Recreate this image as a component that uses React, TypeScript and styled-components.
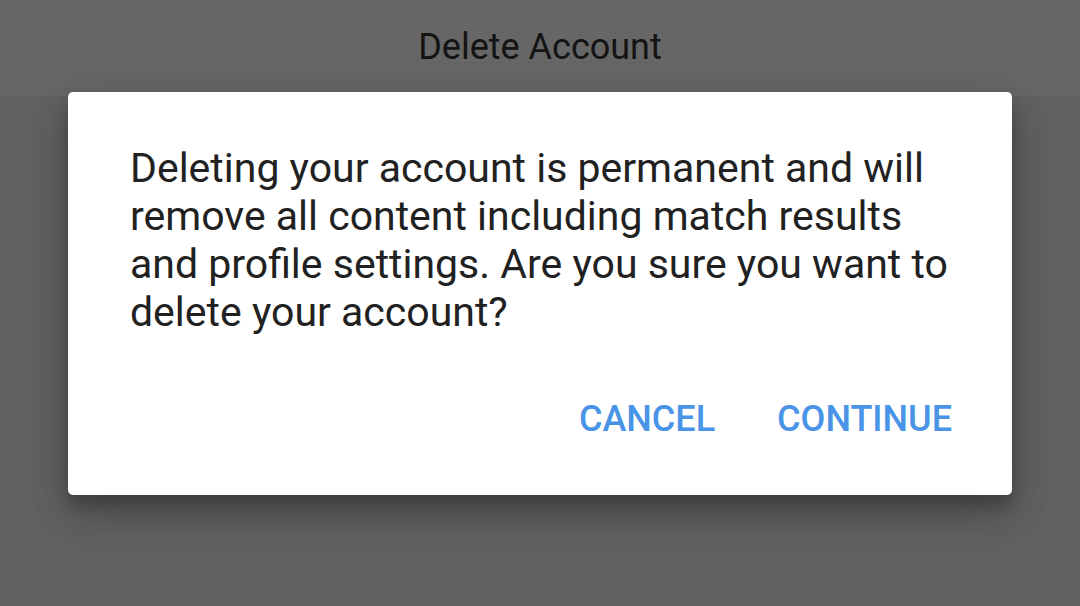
import styled, { createGlobalStyle } from "styled-components";

const GlobalStyle = createGlobalStyle`
  html, body {
    margin: 0;
    padding: 0;
    width: 100%;
    height: 100%;
    overflow: hidden;
    font-family: Roboto, "Noto Sans", sans-serif;
  }
  #root {
    height: 100%;
  }
`;

function App() {
  return (
    <Screen>
      <GlobalStyle />
      <TopBar>
        <TopTitle>Delete Account</TopTitle>
      </TopBar>
      <Body />
      <Scrim>
        <Dialog>
          <Message>
            Deleting your account is permanent and will remove all content
            including match results and profile settings. Are you sure you want
            to delete your account?
          </Message>
          <Actions>
            <ActionButton>CANCEL</ActionButton>
            <ActionButton>CONTINUE</ActionButton>
          </Actions>
        </Dialog>
      </Scrim>
    </Screen>
  );
}

export default App;

const Screen = styled.div`
  position: relative;
  width: 100%;
  height: 100%;
  display: flex;
  flex-direction: column;
  background-color: #616163;
`;

const TopBar = styled.header`
  height: 96px;
  flex-shrink: 0;
  display: flex;
  justify-content: center;
  align-items: center;
  background-color: #666666;
`;

const TopTitle = styled.h1`
  margin: 0 0 2px;
  font-size: 36px;
  font-weight: 400;
  color: #141414;
`;

const Body = styled.main`
  flex: 1;
`;

const Scrim = styled.div`
  position: absolute;
  inset: 0;
  display: flex;
  justify-content: center;
  align-items: flex-start;
  padding-top: 92px;
`;

const Dialog = styled.div`
  width: 944px;
  height: 403px;
  box-sizing: border-box;
  padding: 52px 60px 0 62px;
  background-color: #ffffff;
  border-radius: 5px;
  box-shadow: 0 24px 38px rgba(0, 0, 0, 0.14), 0 9px 46px rgba(0, 0, 0, 0.12),
    0 11px 15px rgba(0, 0, 0, 0.2);
  display: flex;
  flex-direction: column;
`;

const Message = styled.p`
  margin: 0;
  font-size: 41px;
  line-height: 48px;
  color: #212121;
`;

const Actions = styled.div`
  margin-top: 62px;
  display: flex;
  justify-content: flex-end;
  gap: 62px;
`;

const ActionButton = styled.button`
  padding: 0;
  border: none;
  background: none;
  font-family: Roboto, "Noto Sans", sans-serif;
  font-size: 36px;
  line-height: 42px;
  font-weight: 500;
  color: #4a94e8;
`;
